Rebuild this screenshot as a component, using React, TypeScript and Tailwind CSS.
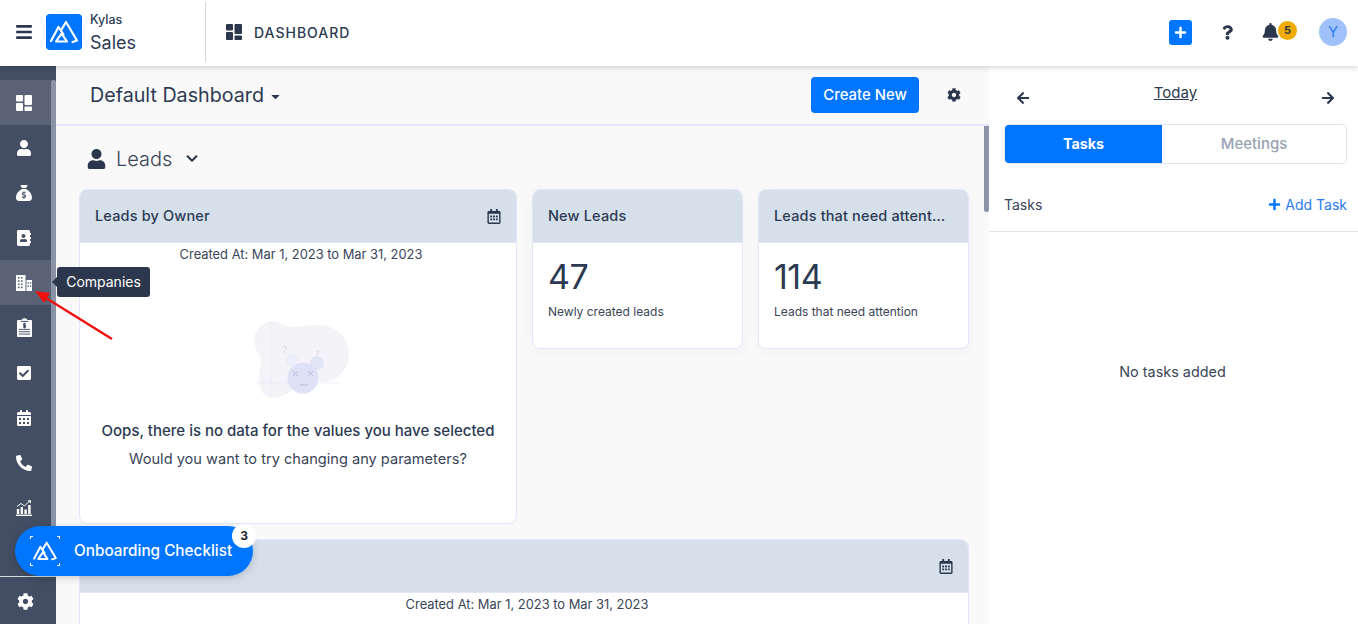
import React from "react";
import { FaUser, FaAddressBook, FaCheckSquare, FaCalendarAlt, FaPhoneAlt, FaCog, FaBars, FaQuestion, FaBell, FaCaretDown, FaRegCalendarAlt, FaChevronDown, FaArrowLeft, FaArrowRight, FaPlus } from "react-icons/fa";
import { FaSackDollar } from "react-icons/fa6";

const DashIcon = ({ className = "" }: { className?: string }) => (
  <svg viewBox="0 0 16 16" className={className} fill="currentColor">
    <rect x="0" y="0" width="7" height="6.5" rx="1" />
    <rect x="0" y="8" width="7" height="8" rx="1" />
    <rect x="8.5" y="0" width="7.5" height="10" rx="1" />
    <rect x="8.5" y="11.5" width="7.5" height="4.5" rx="1" />
  </svg>
);

const Building = ({ className = "" }: { className?: string }) => (
  <svg viewBox="0 0 16 16" className={className}>
    <path fill="#fff" fillRule="evenodd" d="M0 0h9.5v16H0zM2 2v1.6h1.6V2zM5 2v1.6h1.6V2zM2 5.2v1.6h1.6V5.2zM5 5.2v1.6h1.6V5.2zM2 8.4V10h1.6V8.4zM5 8.4V10h1.6V8.4zM2 11.6v1.6h1.6v-1.6zM5 11.6v1.6h1.6v-1.6z" />
    <path fill="#fff" fillRule="evenodd" d="M10.5 5H16v11h-5.5zM11.6 7.2v1.5h1.3V7.2zM14 7.2v1.5h1.2V7.2zM11.6 10.2v1.5h1.3v-1.5zM14 10.2v1.5h1.2v-1.5z" />
  </svg>
);

const Clipboard = ({ className = "" }: { className?: string }) => (
  <svg viewBox="0 0 16 20" className={className}>
    <path fill="#fff" d="M1 2h4c0-1 1-2 3-2s3 1 3 2h4a1 1 0 0 1 1 1v16a1 1 0 0 1-1 1H1a1 1 0 0 1-1-1V3a1 1 0 0 1 1-1z" />
    <path stroke="#434e64" strokeWidth="1" d="M2 12h12M2 14.5h12M2 17h12M4 3.5h8" />
    <path stroke="#434e64" strokeWidth="1.2" fill="none" d="M9.5 6H7.2v1.8h1.8v1.8H6.5M8 5v6" />
  </svg>
);

const ChartUp = ({ className = "" }: { className?: string }) => (
  <svg viewBox="0 0 16 16" className={className} fill="#fff">
    <rect x="0" y="14.6" width="16" height="1.4" />
    <rect x="0.8" y="9" width="2.4" height="5" />
    <rect x="4.6" y="7" width="2.4" height="7" />
    <rect x="8.4" y="9.5" width="2.4" height="4.5" />
    <rect x="12.2" y="5" width="2.4" height="9" />
    <path d="M1 6.5l4-3 3.5 2.5L13.5 1" stroke="#fff" strokeWidth="1" fill="none" />
    <path d="M11.5.2H15v3.4z" />
  </svg>
);

const Logo = ({ className = "", sw = 2.2 }: { className?: string; sw?: number }) => (
  <svg viewBox="0 0 36 36" className={className} fill="none" stroke="#fff" strokeWidth={sw} strokeLinecap="round" strokeLinejoin="round">
    <path d="M5 27L12.5 13L17.5 20.5" />
    <path d="M15.5 15.5L20 8L31 26.5L26.5 28" />
    <path d="M10 27.5L15.5 19.5L21 27.5Z" />
  </svg>
);

const Illustration = () => (
  <svg viewBox="0 0 96 80" className="w-[96px] h-[80px]">
    <path d="M1 22C1 8 14 0 24 3c6 2 10 6 20 5 12-2 24-3 33 0 11 4 19 14 19 27 0 14-9 24-20 27-11 3-20-2-30 2-8 9-16 15-26 15C9 79 6 68 6 56c0-8 4-12 1-19-3-5-6-9-6-15z" fill="#f4f4f8" />
    <path d="M18 3v76M2 64h84" stroke="#e6e9f8" strokeWidth="0.7" />
    <circle cx="39" cy="41" r="6" fill="#eceefa" />
    <circle cx="64" cy="44" r="7" fill="#e2e5f6" />
    <circle cx="50" cy="59" r="15.5" fill="#dfe2f6" />
    <path d="M40 52l5 5m0-5l-5 5M55 52l5 5m0-5l-5 5M47 66h8" stroke="#b5b8d4" strokeWidth="1" fill="none" />
    <path d="M29 29c1-2 4-2 4 0s-2 2-2 5M63 33c1-2 3-1 3 0s-2 1-2 3" stroke="#d4d5e3" strokeWidth="0.9" fill="none" />
  </svg>
);

const navTop = [
  { k: "dash", el: <DashIcon className="w-4 h-4 text-white" />, active: true },
  { k: "user", el: <FaUser className="w-4 h-4 text-white" /> },
  { k: "sack", el: <FaSackDollar className="w-4 h-4 text-white" /> },
  { k: "addr", el: <FaAddressBook className="w-4 h-4 text-white" /> },
  { k: "bld", el: <Building className="w-4 h-4" />, active: true },
  { k: "clip", el: <Clipboard className="w-[15px] h-[19px]" /> },
  { k: "chk", el: <FaCheckSquare className="w-4 h-4 text-white" /> },
  { k: "cal", el: <FaCalendarAlt className="w-4 h-4 text-white" /> },
  { k: "ph", el: <FaPhoneAlt className="w-4 h-4 text-white" /> },
  { k: "chart", el: <ChartUp className="w-4 h-4" /> },
  { k: "more", el: <FaCheckSquare className="w-4 h-4 text-white" /> },
];

const CardHeader = ({ title, icon }: { title: string; icon?: boolean }) => (
  <div className="h-[53px] shrink-0 bg-[#d6e0eb] border-b border-[#e3e7f8] flex items-center justify-between pl-[15px] pr-[15px]">
    <span className="text-[14.5px] tracking-[0.15px] font-medium text-[#2c3a52] truncate max-w-[173px]">{title}</span>
    {icon && <FaRegCalendarAlt className="w-[14px] h-[15px] text-[#2c374d] shrink-0" />}
  </div>
);

const StatCard = ({ title, value, label }: { title: string; value: string; label: string }) => (
  <div className="w-[211px] h-[160px] bg-white rounded-lg border border-[#e3e7f8] overflow-hidden shadow-[0_4px_14px_rgba(0,0,0,0.03)] flex flex-col">
    <CardHeader title={title} />
    <div className="pl-[15px] pr-2 pt-[12px]">
      <div className="text-[34px] leading-[44px] text-[#2c3a52] tracking-[-0.5px]">{value}</div>
      <div className="text-[12px] leading-[16px] text-[#3a4558] mt-[5px]">{label}</div>
    </div>
  </div>
);

export default function App() {
  return (
    <div className="w-[1358px] h-[624px] overflow-hidden relative bg-white text-[#2c3a52] flex flex-col font-['Inter','Roboto',sans-serif]">
      <header className="h-[66px] shrink-0 bg-white flex items-center pb-[2px] relative z-10 shadow-[0_1px_6px_rgba(0,0,0,0.2)]">
        <FaBars className="w-[16px] h-[18px] ml-4 text-[#2c374d]" />
        <div className="ml-[14px] w-9 h-9 rounded-[4px] bg-[#0075ff] flex items-center justify-center">
          <Logo className="w-9 h-9" />
        </div>
        <div className="ml-2 w-[115px] flex flex-col mt-[2px]">
          <span className="text-[12.5px] leading-[16px] font-medium text-[#2c3a52]">Kylas</span>
          <span className="text-[18px] leading-[24px] mt-[3px] text-[#2c3a52]">Sales</span>
        </div>
        <div className="w-px h-[60px] bg-[#d3d6da]" />
        <DashIcon className="ml-5 w-4 h-4 text-[#2c374d]" />
        <span className="ml-3 text-[14px] font-medium tracking-[1px] text-[#2c3a52]">DASHBOARD</span>
        <div className="ml-auto flex items-center">
          <div className="w-[23px] h-[25px] rounded-[3px] bg-[#0075ff] flex items-center justify-center">
            <FaPlus className="w-[13px] h-[13px] text-white" />
          </div>
          <FaQuestion className="ml-[30px] w-[11px] h-[15px] text-[#2c374d]" />
          <FaBell className="ml-[29px] w-[17px] h-[18px] text-[#2c374d]" />
          <div className="-ml-[1px] -mt-1 w-[19px] h-[19px] rounded-full bg-[#f0ab00] flex items-center justify-center text-[11px] font-bold text-[#2c374d]">5</div>
          <div className="ml-[22px] mr-[11px] w-[28px] h-[28px] rounded-full bg-[#a0c1fb] flex items-center justify-center text-[15px] text-[#2b7bf0]">Y</div>
        </div>
      </header>

      <div className="flex flex-1 min-h-0">
        <aside className="w-[56px] shrink-0 bg-[#434e64] flex flex-col relative">
          <div className="flex pt-[14px] flex-1 min-h-0">
            <div className="w-[51px] flex flex-col">
              {navTop.map((n) => (
                <div key={n.k} className={`h-[45px] shrink-0 flex items-center justify-center pr-[3px] ${n.active ? "bg-[#596375]" : ""}`}>
                  {n.el}
                </div>
              ))}
            </div>
            <div className="w-[5px] bg-[#8a93a5] rounded-t-[2px]" />
          </div>
          <div className="h-[48px] shrink-0 border-t border-[#d8dbe2] flex items-center justify-center pr-[6px] pt-[1px] bg-[#434e64]">
            <FaCog className="w-[17px] h-[17px] text-white" />
          </div>
        </aside>

        <main className="w-[933px] shrink-0 bg-[#f9f9f9] flex flex-col min-h-0">
          <div className="h-[60px] shrink-0 border-b-2 border-[#e3e7f8] flex items-center pl-[34px] pr-[28px]">
            <span className="text-[19.7px] text-[#2c3a52] mt-[2px]">Default Dashboard</span>
            <FaCaretDown className="ml-[5px] mt-[2px] w-[13px] h-[13px] text-[#2c374d]" />
            <button className="ml-auto w-[108px] h-9 rounded-[4px] bg-[#0075ff] text-white text-[14.9px] font-medium">Create New</button>
            <FaCog className="ml-[28px] w-[14px] h-[14px] text-[#2c374d]" />
          </div>
          <div className="flex-1 min-h-0 flex overflow-hidden">
            <div className="w-[928px] pl-[23px]">
              <div className="h-[63px] flex items-center pl-[8px] pt-[2px]">
                <FaUser className="w-[19px] h-[20px] text-[#2c374d]" />
                <span className="ml-[10px] text-[20px] font-light text-[#3a4558]">Leads</span>
                <FaChevronDown className="ml-[13px] w-[14px] h-[13px] text-[#2c374d]" />
              </div>
              <div className="flex gap-[15px] items-start">
                <div className="w-[438px] h-[335px] bg-white rounded-lg border border-[#e3e7f8] overflow-hidden flex flex-col items-center">
                  <div className="w-full"><CardHeader title="Leads by Owner" icon /></div>
                  <div className="text-[12.9px] leading-[20px] mt-[2px] ml-[6px] text-[#3a4558]">Created At: Mar 1, 2023 to Mar 31, 2023</div>
                  <div className="mt-[54px] ml-[6px]"><Illustration /></div>
                  <div className="mt-[22px] text-[15px] font-medium leading-[20px] text-[#2c3a52]">Oops, there is no data for the values you have selected</div>
                  <div className="mt-[8px] text-[14.6px] leading-[20px] text-[#3a4558]">Would you want to try changing any parameters?</div>
                </div>
                <StatCard title="New Leads" value="47" label="Newly created leads" />
                <StatCard title="Leads that need attention today" value="114" label="Leads that need attention" />
              </div>
              <div className="mt-[15px] w-[890px] h-[200px] bg-white rounded-lg border border-[#e3e7f8] overflow-hidden flex flex-col items-center">
                <div className="w-full"><CardHeader title="" icon /></div>
                <div className="text-[12.9px] leading-[20px] mt-[2px] ml-[6px] text-[#3a4558]">Created At: Mar 1, 2023 to Mar 31, 2023</div>
              </div>
            </div>
            <div className="w-[5px] h-[86px] bg-[#8d94a8] rounded-b-[2px]" />
          </div>
        </main>

        <section className="flex-1 bg-white flex flex-col min-h-0">
          <div className="h-[58px] shrink-0 flex items-start justify-between pl-[27px] pr-[23px]">
            <FaArrowLeft className="mt-[25px] w-[14px] h-[14px] text-[#2c374d]" />
            <span className="mt-[17px] text-[15px] leading-[20px] underline text-[#2c3a52]">Today</span>
            <FaArrowRight className="mt-[25px] w-[14px] h-[14px] text-[#2c374d]" />
          </div>
          <div className="ml-[15px] mr-[11px] h-[40px] shrink-0 rounded-[5px] border border-[#e2e5ea] flex overflow-hidden">
            <div className="w-[157px] bg-[#0075ff] text-white text-[14.3px] font-bold flex items-center justify-center">Tasks</div>
            <div className="flex-1 text-[#98a2b3] text-[15px] font-medium flex items-center justify-center">Meetings</div>
          </div>
          <div className="h-[68px] shrink-0 border-b border-[#e2e5ea] flex items-center justify-between pl-[15px] pr-[11px] pt-[14px]">
            <span className="text-[14px] text-[#3a4558]">Tasks</span>
            <span className="flex items-center text-[#2b7bf0] text-[14px]">
              <FaPlus className="w-[13px] h-[13px] text-[#0075ff] mr-[4px]" />
              Add Task
            </span>
          </div>
          <div className="mt-[130px] text-center text-[14.4px] leading-[20px] text-[#3a4558] pr-[2px]">No tasks added</div>
        </section>
      </div>

      {/* Tooltip */}
      <div className="absolute left-[57px] top-[267px] w-[93px] h-[30px] rounded-[3px] bg-[#2c374d] text-white text-[14px] flex items-center justify-center pb-[2px] z-20">
        <span className="absolute -left-[5px] top-[10px] w-0 h-0 border-y-[5px] border-y-transparent border-r-[5px] border-r-[#2c374d]" />
        Companies
      </div>

      {/* Red annotation arrow */}
      <svg className="absolute left-0 top-0 z-20 pointer-events-none" width="130" height="350" viewBox="0 0 130 350">
        <path d="M112 339L46 298" stroke="#f01010" strokeWidth="2.4" fill="none" />
        <path d="M35 291L50 293L44 303Z" fill="#f01010" />
      </svg>

      {/* Onboarding pill */}
      <div className="absolute left-[15px] top-[526px] w-[238px] h-[50px] rounded-[25px] bg-[#0075ff] shadow-[0_2px_8px_rgba(0,0,0,0.18)] flex items-center z-20">
        <div className="relative ml-[15px] w-[30px] h-[30px]">
          <Logo className="w-[30px] h-[30px]" sw={2.4} />
          <span className="absolute left-0 top-0 w-[3px] h-[3px] border-l border-t border-white" />
          <span className="absolute right-0 top-0 w-[3px] h-[3px] border-r border-t border-white" />
          <span className="absolute left-0 bottom-0 w-[3px] h-[3px] border-l border-b border-white" />
          <span className="absolute right-0 bottom-0 w-[3px] h-[3px] border-r border-b border-white" />
        </div>
        <span className="ml-[14px] text-white text-[15.3px] font-medium">Onboarding Checklist</span>
        <div className="absolute -right-[3px] -top-[2px] w-[24px] h-[24px] rounded-full bg-white text-[12px] font-bold text-[#1f2937] flex items-center justify-center">3</div>
      </div>
    </div>
  );
}
